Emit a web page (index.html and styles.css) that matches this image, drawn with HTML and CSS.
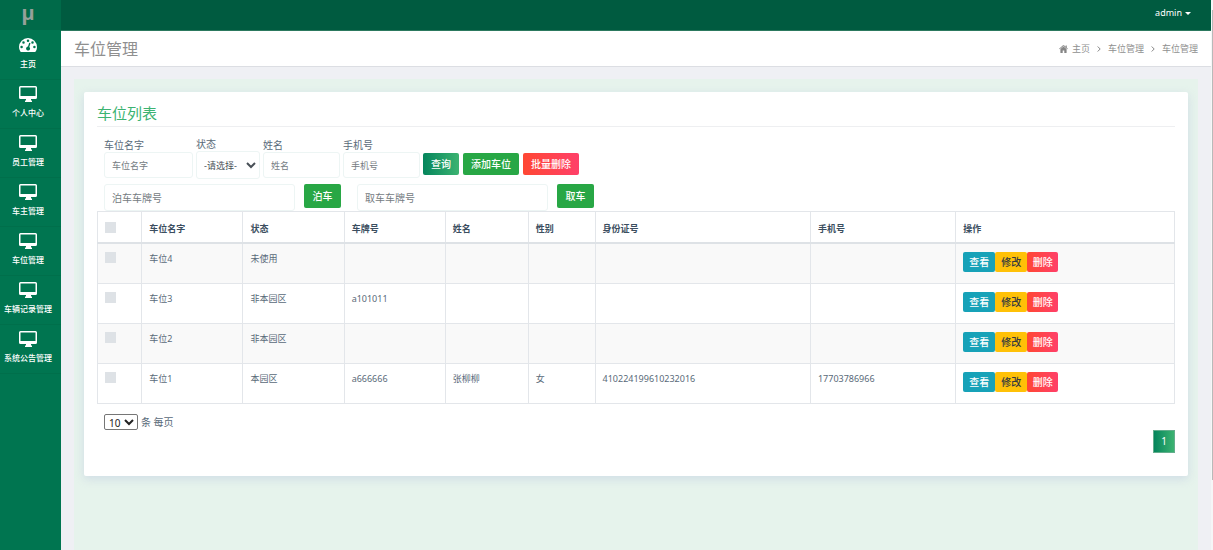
FILE: index.html
```html
<!DOCTYPE html>
<html lang="zh-CN">
<head>
<meta charset="utf-8">
<title>车位管理</title>
<link rel="stylesheet" href="styles.css">
</head>
<body>
<svg class="sprite" aria-hidden="true">
  <symbol id="monitor" viewBox="0 0 18 16"><path fill-rule="evenodd" d="M1.500 0h15a1.500 1.500 0 0 1 1.500 1.500v10a1.500 1.500 0 0 1-1.500 1.500h-4.500v1.500h1v1.500H6v-1.500h1V13H1.500A1.500 1.500 0 0 1 0 11.500v-10A1.500 1.500 0 0 1 1.500 0zM1.500 1.500v8.500h15V1.500z"/></symbol>
  <symbol id="gauge" viewBox="0 0 18 14"><path fill-rule="evenodd" d="M9 0a9 9 0 0 1 9 9c0 1.700-.5 3.300-1.300 4.600-.2.300-.4.400-.7.400H2c-.3 0-.5-.1-.7-.4A8.700 8.700 0 0 1 0 9a9 9 0 0 1 9-9zM2.600 7.800a1.250 1.250 0 1 0 0 2.500 1.250 1.250 0 0 0 0-2.500zM4.500 3.300a1.250 1.250 0 1 0 0 2.500 1.250 1.250 0 0 0 0-2.500zM9 1.400a1.250 1.250 0 1 0 0 2.500 1.250 1.250 0 0 0 0-2.500zM13.500 3.300a1.250 1.250 0 1 0 0 2.500 1.250 1.250 0 0 0 0-2.500zM15.400 7.800a1.250 1.250 0 1 0 0 2.500 1.250 1.250 0 0 0 0-2.500zM10.200 4.800 9 8.600a2 2 0 1 0 1.300.4l1.200-3.800z"/></symbol>
</svg>
<div class="page">
  <aside class="sidebar">
    <a class="logo" href="#">µ</a>
    <nav class="menu">
      <a href="#"><svg class="gauge"><use href="#gauge"/></svg>主页</a>
      <a href="#"><svg><use href="#monitor"/></svg>个人中心</a>
      <a href="#"><svg><use href="#monitor"/></svg>员工管理</a>
      <a href="#"><svg><use href="#monitor"/></svg>车主管理</a>
      <a href="#"><svg><use href="#monitor"/></svg>车位管理</a>
      <a href="#"><svg><use href="#monitor"/></svg>车辆记录管理</a>
      <a href="#"><svg><use href="#monitor"/></svg>系统公告管理</a>
    </nav>
  </aside>
  <div class="main">
    <header class="topbar"><button class="user" type="button">admin <span class="caret"></span></button></header>
    <div class="titlebar">
      <h1>车位管理</h1>
      <nav class="crumbs">
        <a href="#"><svg class="home" viewBox="0 0 18 16"><path d="M9 2.800 2.800 8v7.300c0 .4.300.7.700.7h3.900v-5h3.200v5h3.900c.4 0 .7-.3.700-.7V8zM17.800 7.400 15.500 5.400V1h-2.200v2.500L10 .7a1.600 1.600 0 0 0-2 0L.2 7.400l.8 1L9 1.800l8 6.600z"/></svg>主页</a>
        <svg class="sep" viewBox="0 0 4 6"><path d="M.7.5 3.200 3 .7 5.500"/></svg>
        <a href="#">车位管理</a>
        <svg class="sep" viewBox="0 0 4 6"><path d="M.7.5 3.200 3 .7 5.500"/></svg>
        <span>车位管理</span>
      </nav>
    </div>
    <main class="content">
      <section class="card">
        <h2>车位列表</h2>
        <form class="filters">
          <label class="field spot">车位名字<input type="text" placeholder="车位名字"></label>
          <label class="field state">状态<select><option>-请选择-</option></select></label>
          <label class="field">姓名<input type="text" placeholder="姓名"></label>
          <label class="field">手机号<input type="text" placeholder="手机号"></label>
          <button class="btn query" type="button">查询</button>
          <button class="btn green" type="button">添加车位</button>
          <button class="btn red" type="button">批量删除</button>
        </form>
        <form class="parking">
          <input type="text" placeholder="泊车车牌号" aria-label="泊车车牌号">
          <button class="btn green" type="button">泊车</button>
          <input type="text" placeholder="取车车牌号" aria-label="取车车牌号">
          <button class="btn green" type="button">取车</button>
        </form>
        <table>
          <colgroup><col class="c-check"><col class="c-spot"><col class="c-spot"><col class="c-spot"><col class="c-name"><col class="c-sex"><col class="c-id"><col class="c-phone"><col class="c-ops"></colgroup>
          <thead>
            <tr><th><input type="checkbox" aria-label="全选"></th><th>车位名字</th><th>状态</th><th>车牌号</th><th>姓名</th><th>性别</th><th>身份证号</th><th>手机号</th><th>操作</th></tr>
          </thead>
          <tbody>
            <tr><td><input type="checkbox" aria-label="车位4"></td><td>车位4</td><td>未使用</td><td></td><td></td><td></td><td></td><td></td><td><div class="ops"><button class="view" type="button">查看</button><button class="edit" type="button">修改</button><button class="red" type="button">删除</button></div></td></tr>
            <tr><td><input type="checkbox" aria-label="车位3"></td><td>车位3</td><td>非本园区</td><td>a101011</td><td></td><td></td><td></td><td></td><td><div class="ops"><button class="view" type="button">查看</button><button class="edit" type="button">修改</button><button class="red" type="button">删除</button></div></td></tr>
            <tr><td><input type="checkbox" aria-label="车位2"></td><td>车位2</td><td>非本园区</td><td></td><td></td><td></td><td></td><td></td><td><div class="ops"><button class="view" type="button">查看</button><button class="edit" type="button">修改</button><button class="red" type="button">删除</button></div></td></tr>
            <tr><td><input type="checkbox" aria-label="车位1"></td><td>车位1</td><td>本园区</td><td>a666666</td><td>张柳柳</td><td>女</td><td>410224199610232016</td><td>17703786966</td><td><div class="ops"><button class="view" type="button">查看</button><button class="edit" type="button">修改</button><button class="red" type="button">删除</button></div></td></tr>
          </tbody>
        </table>
        <label class="pagesize"><select><option>10</option></select>条 每页</label>
        <div class="pager"><button type="button">1</button></div>
      </section>
    </main>
  </div>
  <div class="rail"><div class="thumb"></div></div>
</div>
</body>
</html>
```
FILE: styles.css
```css
* { box-sizing: border-box; }

body {
  margin: 0;
  background: #eff0f4;
  color: #596a79;
  font: 9px/14px "Noto Sans", "Noto Sans CJK SC", sans-serif;
}

button, input, select { font: inherit; color: inherit; margin: 0; }
button { border: 0; padding: 0; cursor: pointer; }
a { color: inherit; text-decoration: none; }
.sprite { display: none; }

.page { display: flex; height: 100vh; overflow: hidden; }

/* Sidebar */
.sidebar {
  flex: none;
  width: 61px;
  background: #007550;
  color: #fff;
}
.logo {
  display: block;
  height: 30px;
  background: #006a49;
  color: #96a09a;
  font-size: 20px;
  font-weight: 700;
  line-height: 26px;
  padding-right: 5px;
  text-align: center;
}
.menu { padding-top: 1px; }
.menu a {
  display: flex;
  flex-direction: column;
  align-items: center;
  gap: 4px;
  height: 49px;
  padding: 6px 5px 0 0;
  border-bottom: 1px solid #006f4b;
  font-size: 8px;
  line-height: 14px;
  font-weight: 500;
  white-space: nowrap;
}
.menu svg { width: 18px; height: 16px; fill: #fff; flex: none; }
.menu .gauge { height: 14px; margin: 1px 0; }

/* Header */
.main { flex: 1; min-width: 0; display: flex; flex-direction: column; }
.topbar {
  flex: none;
  display: flex;
  justify-content: flex-end;
  height: 31px;
  padding: 0 20px;
  background: #005b40;
  border-bottom: 1px solid #2c795f;
}
.user {
  display: flex;
  align-items: center;
  gap: 3px;
  height: 26px;
  background: none;
  color: #fff;
}
.caret { border: 3px solid transparent; border-top-color: #fff; border-bottom: 0; }
.titlebar {
  flex: none;
  display: flex;
  align-items: center;
  justify-content: space-between;
  height: 36px;
  padding: 0 13px;
  background: #fff;
  border-bottom: 1px solid #dcdee3;
}
h1 { margin: 0; color: #8f8f8f; font-size: 16px; line-height: 24px; font-weight: 400; }
.crumbs { display: flex; align-items: center; gap: 7px; color: #8f8f8f; }
.crumbs a { display: flex; align-items: center; gap: 4px; }
.home { width: 9px; height: 8px; fill: #858585; }
.sep { width: 4px; height: 6px; fill: none; stroke: #858585; }

/* Content */
.content {
  flex: 1;
  margin: 12px 13px 0;
  padding: 13px 10px;
  background: #e6f3ec;
}
.card {
  padding: 12px 13px 23px;
  background: #fff;
  border-radius: 2px;
  box-shadow: 0 3px 10px rgba(180, 193, 221, 0.45);
}
h2 {
  margin: 0 0 10px;
  padding-bottom: 4px;
  border-bottom: 1px solid #eeeff1;
  color: #3cb371;
  font-size: 15px;
  line-height: 18px;
  font-weight: 400;
}
.filters, .parking { display: flex; padding-left: 7px; }
.filters { align-items: flex-end; gap: 3px; }
.filters .btn { margin-bottom: 3px; }
.filters .btn + .btn { margin-left: 1px; }
.field { display: flex; flex-direction: column; width: 77px; font-size: 10px; }
.field.spot { width: 89px; }
.field.state { width: 64px; }
.field input, .field select, .parking input {
  width: 100%;
  height: 26px;
  padding: 0 7px;
  background: #fff;
  border: 1px solid #edf5f4;
  border-radius: 3px;
  font-size: 9px;
}
.field select { height: 28px; padding: 0 0 0 3px; color: #495057; }
.field.state { margin-bottom: -1px; }
input::placeholder { color: #757b82; opacity: 1; }
.btn {
  height: 22px;
  padding: 0 8px;
  border-radius: 2px;
  color: #fff;
  font-size: 10px;
  font-weight: 500;
  white-space: nowrap;
}
.query { background: linear-gradient(90deg, #05855c, #3cb371); }
.green { background: #28a745; }
.red { background: linear-gradient(90deg, #ff4733, #ff4069); color: #fff; }
.parking { gap: 9px; padding-top: 6px; }
.parking input { width: 191px; height: 27px; font-size: 10px; }
.parking .btn { width: 37px; height: 24px; }
.parking .btn + input { margin-left: 7px; }

/* Table */
table { width: 100%; table-layout: fixed; border-collapse: collapse; }
.c-check { width: 4.1%; }
.c-spot { width: 9.4%; }
.c-name { width: 7.7%; }
.c-sex { width: 6.2%; }
.c-id { width: 20%; }
.c-phone { width: 13.500%; }
th, td { border: 1px solid #e3e6ea; text-align: left; padding: 8px 7px; vertical-align: top; }
th { padding-top: 10px; padding-bottom: 6px; border-bottom: 2px solid #dee2e6; color: #3b4e60; font-weight: 700; }
td { height: 40px; }
tbody tr:nth-child(odd) { background: #f9f9f9; }
th input, td input { appearance: none; display: block; width: 11px; height: 11px; background: #dee2e6; }
.ops { display: flex; }
.ops button { width: 32px; height: 20px; border-radius: 2px; font-size: 10px; font-weight: 500; }
.ops .view { background: #17a2b8; color: #fff; }
.ops .edit { background: #ffc107; color: #343a40; }
.ops .red { width: 31px; }

/* Paging */
.pagesize { display: flex; align-items: center; gap: 3px; padding: 10px 7px 0; font-size: 10px; }
.pagesize select { width: 34px; height: 16px; padding: 0; border: 1px solid #767676; border-radius: 2px; background: #fff; color: #222; font-size: 10px; }
.pager { display: flex; justify-content: flex-end; }
.pager button { width: 22px; height: 23px; border: 1px solid #63ad8c; background: linear-gradient(90deg, #05855c, #3cb371); color: #fff; font-size: 10px; }

.rail { flex: none; width: 2px; padding: 10px 0 0 1px; background: #f6f6f7; }
.thumb { height: 87%; background: #b9b9b9; }
```
